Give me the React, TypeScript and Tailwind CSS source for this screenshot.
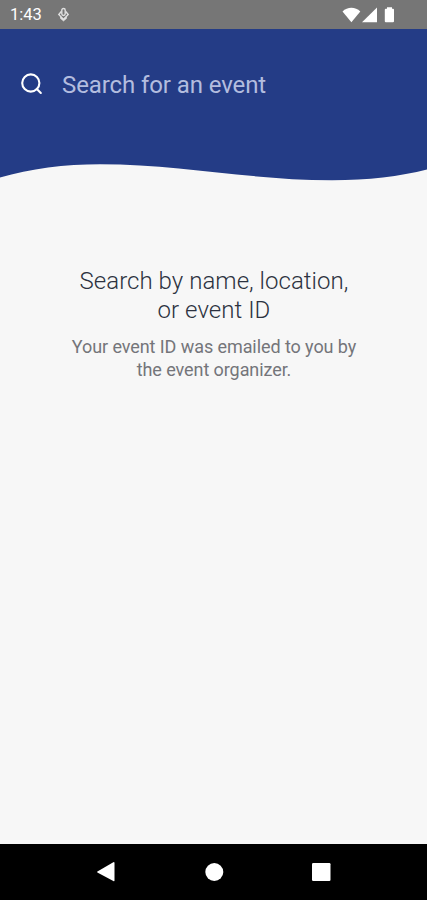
function StatusBar() {
  return (
    <div className="flex h-[29px] shrink-0 items-center bg-[#767676] text-white">
      <span className="ml-[10px] w-[33px] text-[16.5px] leading-[31px] whitespace-nowrap">1:43</span>
      <svg className="ml-[14px]" width="13" height="16" viewBox="0 0 13 16" fill="none" stroke="#e0e0e0">
        <rect x="4.8" y="1.5" width="3.4" height="7" rx="1.7" strokeWidth="1.4" />
        <path d="M4.3 4.5 1.8 7.5 6.5 12.5 11.2 7.5 8.7 4.5" strokeWidth="1.4" />
        <path d="M3.5 9.5 6.5 12 9.5 9.5V11.5L6.5 14 3.5 11.5Z" fill="#e0e0e0" strokeWidth="0.6" />
      </svg>
      <svg className="ml-auto mr-[31px]" width="54" height="18" viewBox="0 0 54 18" fill="#fff">
        <path d="M0.5 5.4C5.5 0.5 13.3 0.5 18.3 5.4L9.4 16.2Z" />
        <path d="M20 16.3 35 1.5V16.3Z" />
        <path d="M45 1.3H50V2.7H51Q52 2.7 52 3.7V15.3Q52 16.3 51 16.3H43.8Q42.8 16.3 42.8 15.3V3.7Q42.8 2.7 43.8 2.7H45Z" />
      </svg>
    </div>
  );
}

function SearchHeader() {
  return (
    <header className="shrink-0">
      <div className="flex h-[131px] items-start bg-[#243c86] pt-[39px]">
        <svg
          className="ml-5 mt-[4px]"
          width="23"
          height="23"
          viewBox="0 0 23 23"
          fill="none"
          stroke="#fff"
          strokeWidth="2.1"
          strokeLinecap="round"
        >
          <circle cx="10.8" cy="11" r="8.6" />
          <path d="M16.8 17 20.8 21" />
        </svg>
        <span className="ml-[19px] text-[24px] leading-[34px] tracking-[-0.1px] whitespace-nowrap text-[#b3bddf]">
          Search for an event
        </span>
      </div>
      <svg className="block w-full" height="24" viewBox="0 0 427 24" preserveAspectRatio="none">
        <path
          d="M0 0H427V9.5C400 16.5 368 20.2 332 20.2C250 20.2 180 4.2 100 4.2C65 4.2 30 8.5 0 17.5Z"
          fill="#243c86"
        />
      </svg>
    </header>
  );
}

function NavBar() {
  return (
    <nav className="flex h-[56px] shrink-0 items-center justify-center bg-black">
      <svg width="236" height="22" viewBox="0 0 236 22" fill="#fff">
        <path d="M1.4 10.4 17.3 1.2Q18.5 0.7 18.5 2V19.6Q18.5 20.7 17.3 20.1L1.4 11.4Q0.8 10.9 1.4 10.4Z" />
        <circle cx="118.3" cy="11" r="9" />
        <rect x="216" y="2" width="18.5" height="18" rx="1.2" />
      </svg>
    </nav>
  );
}

export default function App() {
  return (
    <div className="flex h-[900px] w-[427px] flex-col overflow-hidden bg-[#f7f7f7] font-['Roboto',sans-serif]">
      <StatusBar />
      <SearchHeader />
      <main className="flex-1 pt-[83px] pl-px text-center">
        <h1 className="text-[24px] leading-[29px] font-light tracking-[0.04px] text-[#2c3240]">
          Search by name, location,
          <br />
          or event ID
        </h1>
        <p className="mt-[10px] text-[18px] leading-[23px] tracking-[-0.08px] text-[#74757a]">
          Your event ID was emailed to you by
          <br />
          the event organizer.
        </p>
      </main>
      <NavBar />
    </div>
  );
}
